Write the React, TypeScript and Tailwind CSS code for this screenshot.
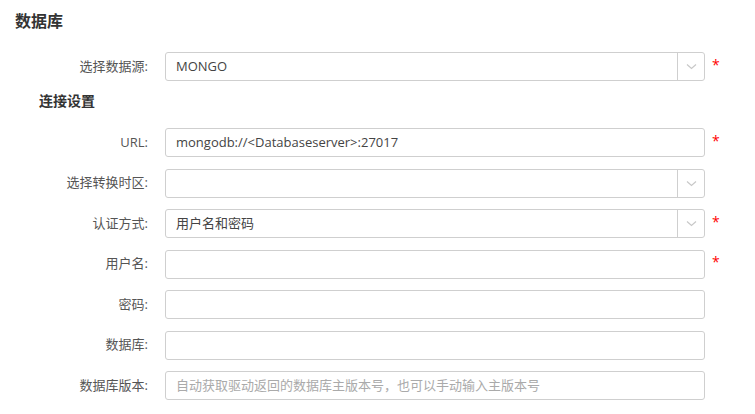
import React from 'react';

const FONT = '"Open Sans", "Noto Sans CJK SC", sans-serif';

const Chevron: React.FC = () => (
    <svg width="11" height="7" viewBox="0 0 11 7" fill="none">
        <polyline points="1,1.5 5.5,5.5 10,1.5" stroke="#c8c8c8" strokeWidth="1.2" />
    </svg>
);

interface FieldRowProps {
    label: string;
    value?: string;
    placeholder?: string;
    select?: boolean;
    required?: boolean;
}

const FieldRow: React.FC<FieldRowProps> = ({ label, value, placeholder, select, required }) => (
    <div className="flex items-center">
        <div className="w-[148px] text-right text-[13px] text-[#555]">{label}:</div>
        <div className="ml-[17px] flex h-[29px] w-[540px] rounded-[3px] border border-[#cfcfcf] bg-white">
            <div className="flex flex-1 items-center pl-[10px] text-[13px]">
                {value ? <span className="text-[#444]">{value}</span> : <span className="text-[#aaa]">{placeholder}</span>}
            </div>
            {select && (
                <div className="flex w-[27px] items-center justify-center border-l border-[#cfcfcf]">
                    <Chevron />
                </div>
            )}
        </div>
        {required && <span className="ml-[7px] -mt-[4px] text-[14px] leading-none text-[#f00]">*</span>}
    </div>
);

const App: React.FC = () => {
    return (
        <div className="min-h-[414px] w-[755px] bg-white" style={{ fontFamily: FONT }}>
            <h2 className="pl-[15px] pt-[9px] text-[16px] font-bold leading-[24px] text-[#333]">数据库</h2>

            <div className="mt-[19px]">
                <FieldRow label="选择数据源" value="MONGO" select required />
            </div>

            <h3 className="mt-[10px] pl-[39px] text-[14px] font-bold leading-[20px] text-[#333]">连接设置</h3>

            <div className="mt-[17px] flex flex-col gap-[11.5px]">
                <FieldRow label="URL" value="mongodb://<Databaseserver>:27017" required />
                <FieldRow label="选择转换时区" select />
                <FieldRow label="认证方式" value="用户名和密码" select required />
                <FieldRow label="用户名" required />
                <FieldRow label="密码" />
                <FieldRow label="数据库" />
                <FieldRow label="数据库版本" placeholder="自动获取驱动返回的数据库主版本号，也可以手动输入主版本号" />
            </div>
        </div>
    );
};

export default App;
